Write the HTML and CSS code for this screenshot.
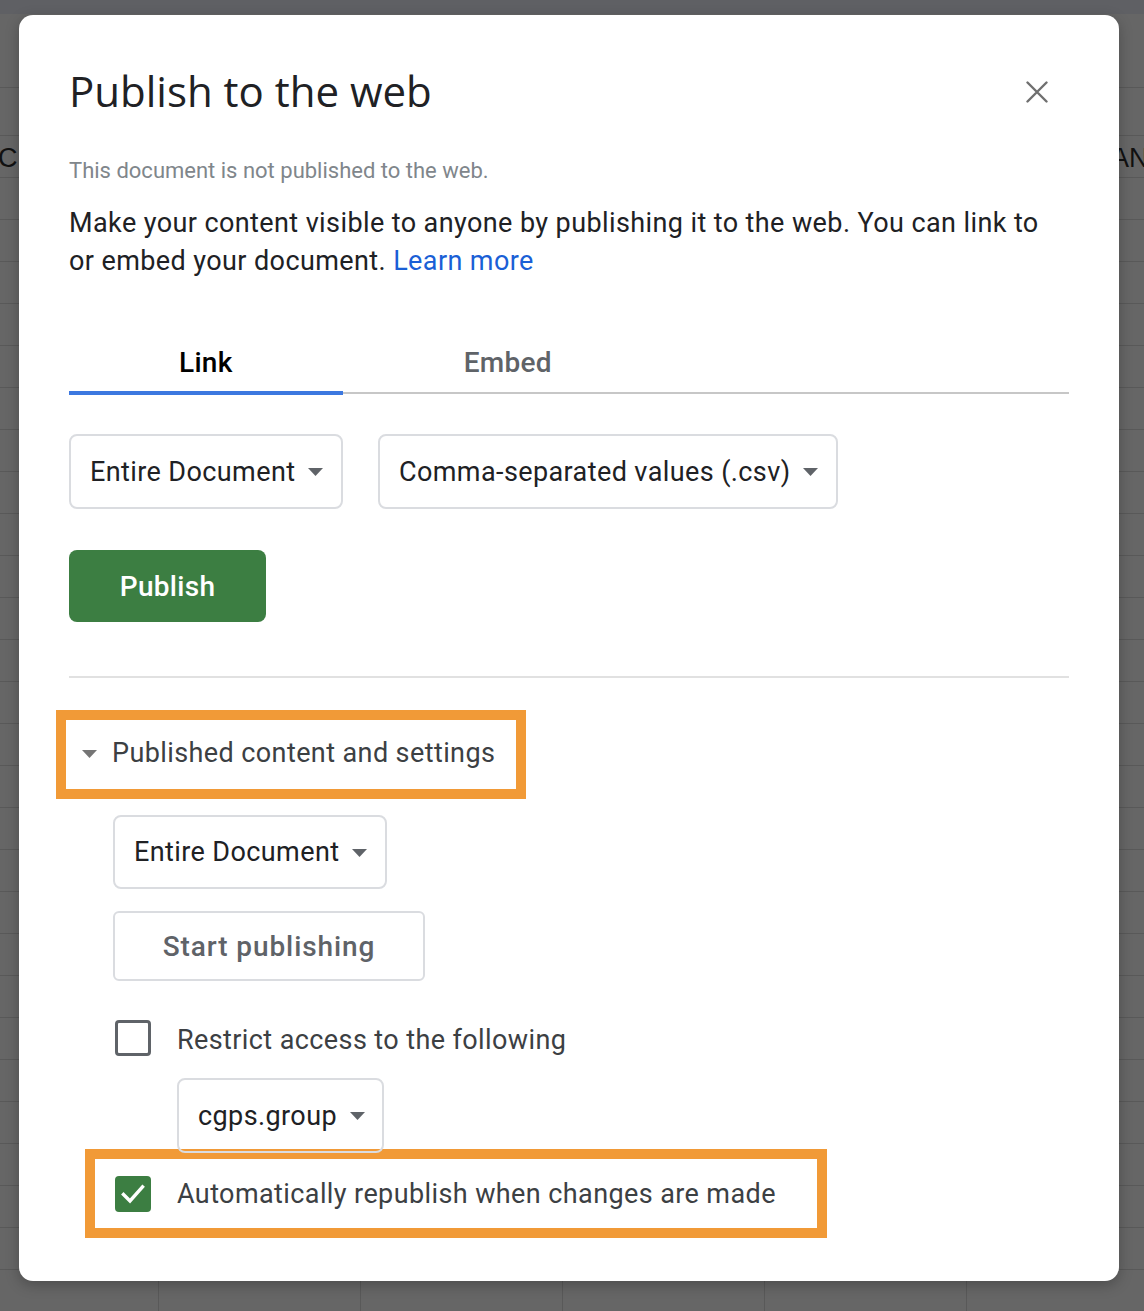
FILE: index.html
```html
<!DOCTYPE html>
<html lang="en">
<head>
<meta charset="utf-8">
<title>Publish to the web</title>
<link rel="stylesheet" href="styles.css">
</head>
<body>
<div class="sheet">
  <div class="topbar"></div>
  <div class="menu-band"></div>
  <div class="col-band"></div>
  <div class="cells">
    <div class="cell-row"><span class="cell-c">C</span><span class="cell-a">ANI</span></div>
  </div>
</div>

<div class="dialog" role="dialog" aria-labelledby="dlg-title">
  <div class="title-row">
    <h1 id="dlg-title" class="title">Publish to the web</h1>
    <button class="close" aria-label="Close">
      <svg width="22" height="22" viewBox="0 0 22 22"><path d="M1.5 1.5L20.5 20.5M20.5 1.5L1.5 20.5" stroke="#6f6f6f" stroke-width="2.4" stroke-linecap="round" fill="none"/></svg>
    </button>
  </div>
  <p class="status">This document is not published to the web.</p>
  <p class="intro">Make your content visible to anyone by publishing it to the web. You can link to or embed your document. <a class="link" href="#">Learn more</a></p>

  <div class="tabs">
    <div class="tab active">Link</div>
    <div class="tab tab-embed">Embed</div>
  </div>

  <div class="select-row">
    <div class="select sel-doc">Entire Document<svg class="caret" width="15" height="8" viewBox="0 0 15 8"><path d="M0 0h15L7.5 8z"/></svg></div>
    <div class="select sel-fmt">Comma-separated values (.csv)<svg class="caret" width="15" height="8" viewBox="0 0 15 8"><path d="M0 0h15L7.5 8z"/></svg></div>
  </div>

  <button class="btn-publish">Publish</button>

  <hr class="divider">

  <div class="highlight hl-section">
    <div class="section-head">
      <svg class="expander" width="15" height="8" viewBox="0 0 15 8"><path d="M0 0h15L7.5 8z"/></svg>
      <span>Published content and settings</span>
    </div>
  </div>

  <div class="settings">
    <div class="select sel-doc2">Entire Document<svg class="caret" width="15" height="8" viewBox="0 0 15 8"><path d="M0 0h15L7.5 8z"/></svg></div>
    <button class="btn-start">Start publishing</button>
    <div class="check-row">
      <span class="checkbox"></span>
      <span class="check-label">Restrict access to the following</span>
    </div>
    <div class="select sel-domain">cgps.group<svg class="caret" width="15" height="8" viewBox="0 0 15 8"><path d="M0 0h15L7.5 8z"/></svg></div>
  </div>

  <div class="highlight hl-auto">
    <div class="check-row inner">
      <span class="checkbox checked"><svg width="36" height="36" viewBox="0 0 36 36"><path d="M8.5 18.5L15 25L27.5 11" stroke="#fff" stroke-width="3.4" fill="none" stroke-linecap="square"/></svg></span>
      <span class="check-label">Automatically republish when changes are made</span>
    </div>
  </div>
</div>
</body>
</html>
```

FILE: styles.css
```css
* { box-sizing: border-box; }

html, body {
  margin: 0;
  padding: 0;
}

body {
  width: 1144px;
  height: 1311px;
  overflow: hidden;
  position: relative;
  font-family: Roboto, "Liberation Sans", Arial, sans-serif;
  background: #666666;
}

/* ---------- dimmed spreadsheet behind ---------- */
.sheet {
  width: 1144px;
  height: 1311px;
  background: #666666;
  overflow: hidden;
}
.topbar {
  height: 14px;
  background: #5f6064;
}
.menu-band {
  height: 74px;
  border-bottom: 1px solid #595959;
}
.col-band {
  height: 48px;
  border-bottom: 1px solid #595959;
}
.cells {
  height: 1175px;
  background-image:
    repeating-linear-gradient(to bottom, transparent 0 41px, #595959 41px 42px),
    repeating-linear-gradient(to right, transparent 0 201px, #595959 201px 202px);
  background-position: 0 0, -43px 0;
}
.cell-row {
  height: 42px;
  display: flex;
  justify-content: space-between;
  align-items: center;
  font-family: "Liberation Sans", Arial, sans-serif;
  font-size: 27px;
  color: #111;
  padding-top: 2px;
}
.cell-c { margin-left: -2px; }
.cell-a { margin-right: -12px; }

/* ---------- dialog ---------- */
.dialog {
  position: absolute;
  left: 19px;
  top: 15px;
  width: 1100px;
  height: 1266px;
  background: #ffffff;
  border-radius: 14px;
  box-shadow: 0 4px 14px rgba(0, 0, 0, 0.25);
  padding: 51px 50px 0 50px;
}

.title-row {
  display: flex;
  justify-content: space-between;
  align-items: center;
  height: 52px;
}
.title {
  margin: 0;
  font-family: "Open Sans", Roboto, sans-serif;
  font-weight: 400;
  font-size: 42px;
  line-height: 52px;
  letter-spacing: 0;
  color: #202124;
  margin-top: -2px;
}
.close {
  border: 0;
  background: none;
  padding: 0;
  margin-right: 21px;
  width: 22px;
  height: 22px;
  display: flex;
}

.status {
  margin: 38px 0 0 0;
  font-size: 22px;
  line-height: 30px;
  color: #80868b;
}
.intro {
  margin: 18px 0 0 0;
  font-size: 27px;
  letter-spacing: 0.4px;
  line-height: 38px;
  color: #202124;
  max-width: 990px;
}
.link {
  color: #1a5fd6;
  text-decoration: none;
}

/* tabs */
.tabs {
  margin-top: 64px;
  display: flex;
  border-bottom: 2px solid #c7c7c7;
  height: 50px;
}
.tab {
  padding: 0 110px 0 110px;
  font-size: 28px;
  letter-spacing: 0.3px;
  font-weight: 500;
  line-height: 38px;
  color: #5f6368;
  height: 48px;
}
.tab-embed {
  padding-left: 121px;
}
.tab.active {
  color: #000000;
  border-bottom: 4px solid #3c78e0;
  height: 51px;
  margin-bottom: -3px;
}

/* selects */
.select-row {
  margin-top: 40px;
  display: flex;
  gap: 35px;
}
.select {
  height: 75px;
  border: 2px solid #dadce0;
  border-radius: 8px;
  display: inline-flex;
  align-items: center;
  padding: 0 18px 0 19px;
  font-size: 27px;
  letter-spacing: 0.4px;
  color: #202124;
  white-space: nowrap;
}
.caret {
  margin-left: 13px;
  fill: #5f6368;
  flex: none;
  margin-top: 1px;
}
.sel-doc { width: 274px; }
.sel-fmt { width: 460px; }

.btn-publish {
  display: block;
  margin-top: 41px;
  width: 197px;
  height: 72px;
  border: 0;
  border-radius: 8px;
  background: #3c7e42;
  color: #ffffff;
  font-family: Roboto, sans-serif;
  font-size: 28px;
  letter-spacing: 0.3px;
  font-weight: 500;
  padding: 0;
}

.divider {
  margin: 54px 0 0 0;
  border: 0;
  border-top: 2px solid #e1e1e1;
  height: 0;
}

/* orange annotation boxes */
.highlight {
  border: 10px solid #f19a37;
  background: #ffffff;
}
.hl-section {
  margin-top: 32px;
  margin-left: -13px;
  width: 470px;
  height: 89px;
}
.section-head {
  height: 69px;
  display: flex;
  align-items: center;
  padding-left: 16px;
  padding-bottom: 4px;
  font-size: 27px;
  letter-spacing: 0.4px;
  color: #3c4043;
}
.expander {
  fill: #757575;
  margin-right: 15px;
  margin-top: 2px;
}

.settings {
  padding-left: 44px;
  display: flex;
  flex-direction: column;
  align-items: flex-start;
}
.sel-doc2 {
  margin-top: 16px;
  width: 274px;
  height: 74px;
}
.btn-start {
  margin-top: 22px;
  width: 312px;
  height: 70px;
  border: 2px solid #dadce0;
  border-radius: 6px;
  background: #ffffff;
  color: #5f6368;
  font-family: Roboto, sans-serif;
  font-size: 28px;
  letter-spacing: 0.9px;
  font-weight: 500;
  padding: 0;
}

.check-row {
  display: flex;
  align-items: center;
  height: 36px;
  margin-top: 39px;
  padding-left: 2px;
}
.checkbox {
  width: 36px;
  height: 36px;
  border: 3px solid #5f6368;
  border-radius: 4px;
  flex: none;
  display: flex;
}
.check-label {
  margin-left: 26px;
  font-size: 27px;
  letter-spacing: 0.4px;
  color: #3c4043;
  margin-top: 3px;
}
.sel-domain {
  margin-top: 22px;
  margin-left: 64px;
  width: 207px;
  height: 75px;
}

.hl-auto {
  margin-top: -4px;
  margin-left: 16px;
  width: 742px;
  height: 89px;
  display: flex;
  align-items: center;
}
.check-row.inner {
  margin-top: 0;
  padding-left: 20px;
}
.check-row.inner .check-label {
  margin-top: 0;
}
.checkbox.checked {
  border: 0;
  background: #3c7e42;
}
.checkbox.checked svg { display: block; }
```
